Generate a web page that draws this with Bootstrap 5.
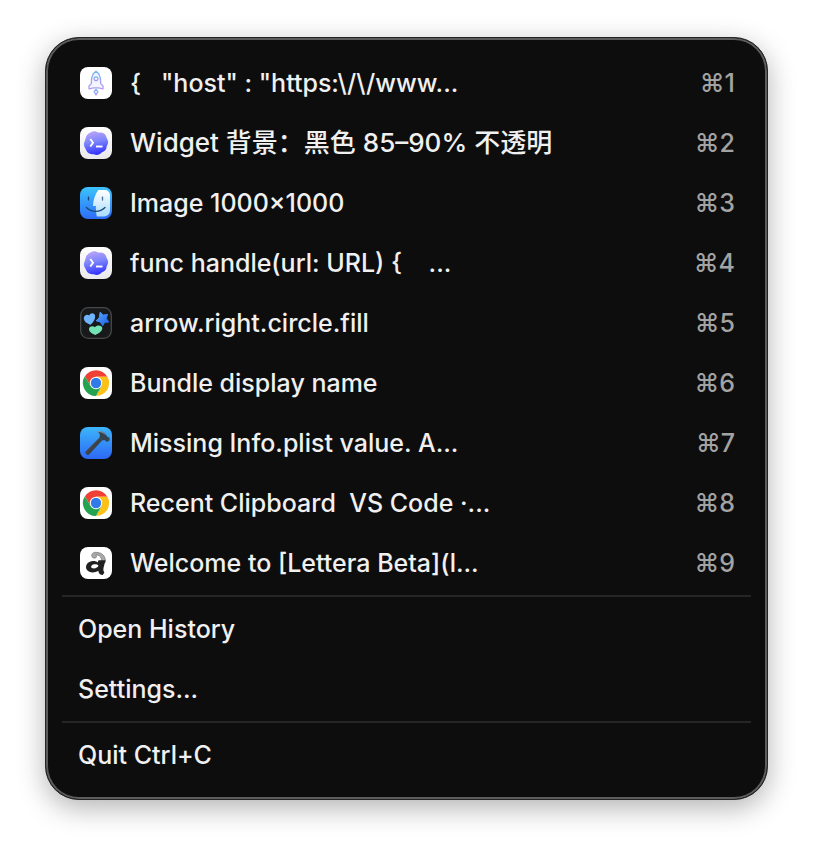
<!DOCTYPE html>
<html lang="en">
<head>
<meta charset="utf-8">
<meta name="viewport" content="width=device-width, initial-scale=1">
<title>Clipboard menu</title>
<link href="https://cdn.jsdelivr.net/npm/bootstrap@5.3.0/dist/css/bootstrap.min.css" rel="stylesheet">
<style>
body { background: #fff; font-family: Inter, "Noto Sans CJK SC", sans-serif; }
.clip-page { padding: 37px 45px 53px; }
.clip-menu {
  background: #0d0d0d;
  border: 1px solid #242424;
  border-radius: 34px;
  box-shadow: inset 0 0 0 2px #5c5c5c, 0 8px 28px rgba(0, 0, 0, .3);
  padding: 15px 16px 14px;
}
.clip-item {
  color: #f0f0f0;
  font-size: 25px;
  font-weight: 500;
  line-height: 30px;
  min-height: 60px;
  padding: 0 16px;
}
.clip-item:hover, .clip-item:focus { background: #262626; color: #fff; }
.clip-text { white-space: pre; }
.clip-text:lang(zh) { font-size: 26px; }
.clip-key { color: #a3a3a3; }
.clip-icon { width: 36px; height: 36px; flex: none; }
.clip-rule { border-top: 2px solid #262626; opacity: 1; margin: 2px 0; }
</style>
<script src="https://cdn.jsdelivr.net/npm/bootstrap@5.3.0/dist/js/bootstrap.bundle.min.js" defer></script>
</head>
<body>
<svg width="0" height="0" class="position-absolute" aria-hidden="true">
  <defs>
    <linearGradient id="gRocket" x1="0" y1="0" x2="0" y2="1"><stop offset="0" stop-color="#68b7f5"/><stop offset=".55" stop-color="#9aa4f3"/><stop offset="1" stop-color="#b39af2"/></linearGradient>
    <linearGradient id="gTile" x1="0" y1="0" x2="0" y2="1"><stop offset="0" stop-color="#fff"/><stop offset="1" stop-color="#e9e9eb"/></linearGradient>
    <linearGradient id="gBlob" x1=".4" y1="0" x2=".6" y2="1"><stop offset="0" stop-color="#b9a3fb"/><stop offset=".45" stop-color="#7a84fb"/><stop offset="1" stop-color="#2d2cff"/></linearGradient>
    <linearGradient id="gFinder" x1="0" y1="0" x2="0" y2="1"><stop offset="0" stop-color="#3cc4fd"/><stop offset="1" stop-color="#2e6cf8"/></linearGradient>
    <linearGradient id="gFace" x1="0" y1="0" x2="0" y2="1"><stop offset="0" stop-color="#fff"/><stop offset="1" stop-color="#a9dcfd"/></linearGradient>
    <linearGradient id="gXcode" x1="0" y1="0" x2="0" y2="1"><stop offset="0" stop-color="#3cb6fb"/><stop offset="1" stop-color="#2d68f6"/></linearGradient>
    <linearGradient id="gStar" x1="0" y1="0" x2="1" y2="1"><stop offset="0" stop-color="#5aa5fa"/><stop offset="1" stop-color="#1c63ea"/></linearGradient>
    <linearGradient id="gHandle" x1="0" y1="0" x2="1" y2="1"><stop offset="0" stop-color="#5e6469"/><stop offset="1" stop-color="#1e2327"/></linearGradient>
  </defs>
  <symbol id="icRocket" viewBox="0 0 36 36">
    <rect x="2" y="2" width="32" height="32" rx="8" fill="#fff"/>
    <g fill="#f4f5ff" stroke="url(#gRocket)" stroke-width="1.3" stroke-linejoin="round">
      <path d="M18 6.300c-3.500 2.700-4.600 6-4.600 9.700v2.600l-2.400 2.400v2.800l4.600-1h4.800l4.600 1V21l-2.400-2.400V16c0-3.700-1.100-7-4.600-9.700z"/>
      <circle cx="18" cy="13.700" r="1.900"/>
      <path d="M18 24.300l1.900 2.300L18 30l-1.900-3.400z"/>
    </g>
  </symbol>
  <symbol id="icBlob" viewBox="0 0 36 36">
    <rect x="2" y="2" width="32" height="32" rx="8" fill="url(#gTile)"/>
    <path d="M12.500 7.400C15 5.600 18.500 6 20.600 7.800c3-.8 7 .6 7.600 4 .3 1.600 2.100 3.100 1.900 5.600-.1 1.900-1.600 3.100-1.600 4.900-.3 3.300-2.700 4.300-4.800 5.200-2 2.600-5.400 3.100-7.900 1.700-3.300.3-6.600-.8-7.600-3.900-.5-1.800-2.300-3.200-2.300-5.700 0-2.200 1.200-3.500 1.500-5.300.3-3.200 2.500-5.900 5.100-6.900z" fill="url(#gBlob)"/>
    <path d="M12.300 14l2.700 3.800-2.700 3.700" fill="none" stroke="#fff" stroke-width="1.900"/>
    <path d="M18 21.500h6.500" stroke="#fff" stroke-width="1.900"/>
  </symbol>
  <symbol id="icFinder" viewBox="0 0 36 36">
    <rect x="2" y="2" width="32" height="32" rx="8" fill="url(#gFinder)"/>
    <path d="M20.400 5H27a5 5 0 0 1 5 5v15.500a6 6 0 0 1-6 6h-7.200c-.8-3.600-1-7-.9-10.500h-3c.4-6.200 2.200-12 5.500-16z" fill="url(#gFace)"/>
    <path d="M10.500 12.200v2.800" stroke="#174777" stroke-width="1.300" stroke-linecap="round"/>
    <path d="M24.500 12.200v2.800" stroke="#497095" stroke-width="1.300" stroke-linecap="round"/>
    <path d="M8.300 22.500c5 4.900 13.500 5.300 18.700 0" fill="none" stroke="#1b4b78" stroke-width="1.300" stroke-linecap="round"/>
  </symbol>
  <symbol id="icSymbols" viewBox="0 0 36 36">
    <rect x="2.700" y="2.700" width="30.600" height="30.600" rx="7.500" fill="#18191b" stroke="#47484a" stroke-width="1.300"/>
    <path d="M12.600 19.800c-3.800-1.300-6.900-3.500-6.800-6.500.1-3 3.400-4.300 5.400-2.800 1.300-3.200 5.500-3 5.900.2.400 3.400-1.700 6.500-4.500 9.100z" fill="#6fb4fa"/>
    <path d="M22.200 7.200l3 2.900 4.300-.7-1.200 4.100 2.400 3.600-4 .2-1.900 3.400-2.500-3.800-4.200-1.100 3.100-2.900z" fill="url(#gStar)" stroke="url(#gStar)" stroke-width="1" stroke-linejoin="round"/>
    <path d="M17.400 30c-3-1-6.200-3-6.400-5.700-.1-3 3.900-3.900 5.900-2 2-2.900 7.300-2.200 7.400.8.100 3-3.600 5.600-6.900 6.900z" fill="#73e3b3"/>
  </symbol>
  <symbol id="icChrome" viewBox="0 0 36 36">
    <rect x="2" y="2" width="32" height="32" rx="8" fill="#fff"/>
    <g transform="translate(18 18)">
      <path d="M0-6.200H11.300A13 13 0 0 0-11.100-6.700L-5.400 3.100z" fill="#ef4034"/>
      <path d="M0-6.200H11.500A13 13 0 0 1 .1 13L5.400 3.100z" fill="#fbc116"/>
      <path d="M5.400 3.100L0 13A13 13 0 0 1-11.200-6.700L-5.400 3.100z" fill="#23a350"/>
      <circle r="6.200" fill="#fff"/>
      <circle r="5.200" fill="#317be8"/>
    </g>
  </symbol>
  <symbol id="icHammer" viewBox="0 0 36 36">
    <rect x="2" y="2" width="32" height="32" rx="8" fill="url(#gXcode)"/>
    <path d="M21.800 12.300l2.700 2.700L11 29.500c-1.800 1.300-4.500-1-3.400-3z" fill="url(#gHandle)"/>
    <path d="M19.500 6.700c3.500-1 6.200.1 8.100 2.300l1.900 2.900 1.800.7.400 2.600-2.500 1.900-3-2.200-1.500.5-3.200-3.200.5-2.300c-.4-1.300-1.200-2.200-2.500-3.200z" fill="#34444f"/>
    <path d="M19.800 6.800c3.300-.7 5.900.7 7.600 2.900" fill="none" stroke="#9aa8b1" stroke-width=".9"/>
  </symbol>
  <symbol id="icLettera" viewBox="0 0 36 36">
    <rect x="2" y="2" width="32" height="32" rx="8" fill="#fff"/>
    <path d="M14.300 12.200c-1.500-2.500.2-5 3.500-4.900 6.200.1 10.100 3.700 9.600 10h-3.800c.2-4.800-1.700-7.500-6-7.300 1.400.8 1.200 2.600-.3 3-1.300.3-2.300.1-3-.8z" fill="#aaa" stroke="#666" stroke-width=".6"/>
    <path fill-rule="evenodd" d="M20.500 15.300h6.900c-.7 3.900-2 6.900-2.100 9.800l1 2.600-1.600 2.200c-2.400 0-4-1.300-4.400-4.200-3.700 2.500-9.100 2.200-11.300-.7-2.700-3.900.6-8.900 6.200-9 2 0 3.800.6 4.500 1.400zm-5.300 4.300c-2 .5-2.800 3.200-.8 3.700 2.500.5 5.900-.5 6-2.700-.8-1.200-3.200-1.500-5.200-1z" fill="#202020"/>
  </symbol>
</svg>

<main class="clip-page">
  <nav class="clip-menu" aria-label="Clipboard menu">
    <div class="d-flex flex-column">
      <button type="button" class="clip-item btn border-0 text-start d-flex align-items-center gap-3"><svg class="clip-icon" aria-hidden="true"><use href="#icRocket"/></svg><span class="clip-text flex-grow-1">{   "host" : "https:\/\/www...</span><span class="clip-key">⌘1</span></button>
      <button type="button" class="clip-item btn border-0 text-start d-flex align-items-center gap-3"><svg class="clip-icon" aria-hidden="true"><use href="#icBlob"/></svg><span class="clip-text flex-grow-1" lang="zh-CN">Widget 背景：黑色 85–90% 不透明</span><span class="clip-key">⌘2</span></button>
      <button type="button" class="clip-item btn border-0 text-start d-flex align-items-center gap-3"><svg class="clip-icon" aria-hidden="true"><use href="#icFinder"/></svg><span class="clip-text flex-grow-1">Image 1000×1000</span><span class="clip-key">⌘3</span></button>
      <button type="button" class="clip-item btn border-0 text-start d-flex align-items-center gap-3"><svg class="clip-icon" aria-hidden="true"><use href="#icBlob"/></svg><span class="clip-text flex-grow-1">func handle(url: URL) {    ...</span><span class="clip-key">⌘4</span></button>
      <button type="button" class="clip-item btn border-0 text-start d-flex align-items-center gap-3"><svg class="clip-icon" aria-hidden="true"><use href="#icSymbols"/></svg><span class="clip-text flex-grow-1">arrow.right.circle.fill</span><span class="clip-key">⌘5</span></button>
      <button type="button" class="clip-item btn border-0 text-start d-flex align-items-center gap-3"><svg class="clip-icon" aria-hidden="true"><use href="#icChrome"/></svg><span class="clip-text flex-grow-1">Bundle display name</span><span class="clip-key">⌘6</span></button>
      <button type="button" class="clip-item btn border-0 text-start d-flex align-items-center gap-3"><svg class="clip-icon" aria-hidden="true"><use href="#icHammer"/></svg><span class="clip-text flex-grow-1">Missing Info.plist value. A...</span><span class="clip-key">⌘7</span></button>
      <button type="button" class="clip-item btn border-0 text-start d-flex align-items-center gap-3"><svg class="clip-icon" aria-hidden="true"><use href="#icChrome"/></svg><span class="clip-text flex-grow-1">Recent Clipboard  VS Code ·...</span><span class="clip-key">⌘8</span></button>
      <button type="button" class="clip-item btn border-0 text-start d-flex align-items-center gap-3"><svg class="clip-icon" aria-hidden="true"><use href="#icLettera"/></svg><span class="clip-text flex-grow-1">Welcome to [Lettera Beta](l...</span><span class="clip-key">⌘9</span></button>
    </div>
    <hr class="clip-rule">
    <div class="d-flex flex-column">
      <button type="button" class="clip-item btn border-0 text-start">Open History</button>
      <button type="button" class="clip-item btn border-0 text-start">Settings...</button>
    </div>
    <hr class="clip-rule">
    <div class="d-flex flex-column">
      <button type="button" class="clip-item btn border-0 text-start">Quit Ctrl+C</button>
    </div>
  </nav>
</main>
</body>
</html>
